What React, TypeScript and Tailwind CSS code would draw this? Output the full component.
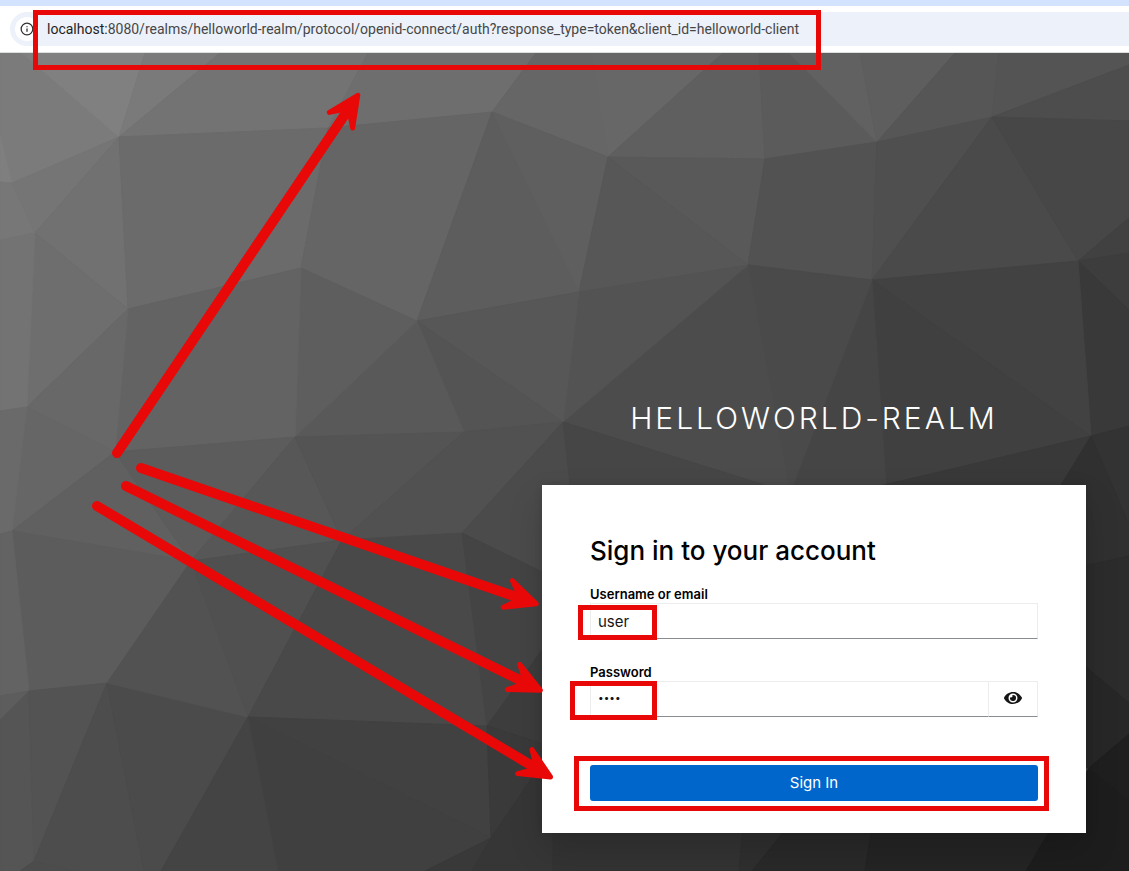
import React, { useState } from "react";
import { FaEye } from "react-icons/fa";
import { Info } from "lucide-react";

type Facet = [points: string, fill: string];

// Low-poly backdrop, drawn from the light top-left corner to the dark bottom-right one.
const FACETS: Facet[] = [
  ["0,53 22,53 119,137 12,183 0,135", "#7b7b7b"],
  ["22,53 145,53 119,137", "#808080"],
  ["145,53 220,53 119,137", "#7a7a7a"],
  ["220,53 368,53 328,128 119,137", "#737373"],
  ["368,53 536,53 492,112 328,128", "#6e6e6e"],
  ["536,53 591,53 608,157 492,112", "#666666"],
  ["591,53 723,53 608,157", "#676767"],
  ["723,53 759,53 765,159 608,157", "#5f5f5f"],
  ["759,53 789,53 877,142 765,159", "#5b5b5b"],
  ["789,53 860,53 877,142", "#616161"],
  ["860,53 955,53 877,142", "#5e5e5e"],
  ["955,53 999,53 992,117 877,142", "#565656"],
  ["999,53 1129,53 1129,65 992,117", "#545454"],
  ["992,117 1129,65 1129,121", "#4d4d4d"],
  ["0,135 12,183 0,182", "#7f7f7f"],
  ["0,182 12,183 35,233 0,240", "#777777"],
  ["12,183 119,137 35,233", "#757575"],
  ["119,137 128,309 35,233", "#717171"],
  ["35,233 128,309 27,407", "#6e6e6e"],
  ["35,233 27,407 0,411 0,240", "#737373"],
  ["119,137 328,128 301,268 128,309", "#6b6b6b"],
  ["328,128 492,112 417,321 301,268", "#656565"],
  ["492,112 579,292 417,321", "#5d5d5d"],
  ["492,112 608,157 579,292", "#5f5f5f"],
  ["608,157 765,159 748,265", "#595959"],
  ["608,157 748,265 579,292", "#575757"],
  ["765,159 877,142 872,280 748,265", "#525252"],
  ["877,142 992,117 872,280", "#4f4f4f"],
  ["992,117 1078,261 872,280", "#4a4a4a"],
  ["992,117 1129,121 1129,218 1078,261", "#474747"],
  ["1078,261 1129,218 1129,253", "#414141"],
  ["1078,261 1129,253 1129,310", "#3d3d3d"],
  ["1078,261 1129,310 1129,426 1091,436", "#393939"],
  ["872,280 1078,261 1091,436", "#424242"],
  ["872,280 1091,436 886,485", "#404040"],
  ["872,280 886,485 790,493", "#454545"],
  ["748,265 872,280 790,493", "#4a4a4a"],
  ["748,265 790,493 563,422", "#4c4c4c"],
  ["579,292 748,265 563,422", "#535353"],
  ["417,321 579,292 563,422", "#575757"],
  ["417,321 563,422 464,432", "#545454"],
  ["417,321 464,432 295,437", "#595959"],
  ["301,268 417,321 295,437", "#5e5e5e"],
  ["128,309 301,268 295,437 115,452", "#636363"],
  ["128,309 115,452 27,407", "#686868"],
  ["27,407 115,452 12,531", "#666666"],
  ["27,407 12,531 0,534 0,411", "#6a6a6a"],
  ["115,452 191,561 12,531", "#606060"],
  ["115,452 295,437 191,561", "#5c5c5c"],
  ["295,437 342,540 191,561", "#575757"],
  ["295,437 464,432 342,540", "#545454"],
  ["464,432 563,422 462,533 342,540", "#515151"],
  ["563,422 571,485 542,600 462,533", "#4b4b4b"],
  ["12,531 191,561 107,683 29,691", "#5c5c5c"],
  ["12,531 29,691 0,696 0,534", "#636363"],
  ["0,696 29,691 0,720", "#5d5d5d"],
  ["0,720 29,691 34,861 20,871 0,871", "#555555"],
  ["29,691 107,683 34,861", "#535353"],
  ["34,861 20,871 76,871", "#4c4c4c"],
  ["107,683 34,861 76,871 144,871", "#4d4d4d"],
  ["107,683 144,871 161,871 248,717", "#4b4b4b"],
  ["107,683 191,561 248,717", "#525252"],
  ["191,561 342,540 248,717", "#505050"],
  ["342,540 462,533 487,726 248,717", "#494949"],
  ["462,533 553,577 553,635 487,726", "#444444"],
  ["248,717 487,726 491,838", "#414141"],
  ["248,717 491,838 425,871 278,871", "#404040"],
  ["248,717 278,871 161,871", "#444444"],
  ["487,726 553,635 553,747", "#3d3d3d"],
  ["487,726 553,747 491,838", "#3a3a3a"],
  ["491,838 425,871 472,871", "#393939"],
  ["491,838 553,747 553,871 472,871", "#363636"],
  ["563,422 790,493 571,493", "#464646"],
  ["553,747 742,820 739,871 553,871", "#333333"],
  ["743,820 793,820 752,871 739,871", "#2f2f2f"],
  ["793,820 873,820 865,871 752,871", "#292929"],
  ["873,820 1056,820 1026,871 865,871", "#242424"],
  ["1056,820 1089,768 1129,800 1129,871 1026,871", "#1d1d1d"],
  ["1091,436 1061,485 1061,493 850,493", "#393939"],
  ["1091,436 1129,426 1129,525", "#333333"],
  ["1091,436 1129,525 1129,556 1080,567 1061,485", "#303030"],
  ["1080,567 1129,556 1129,703 1080,662", "#2c2c2c"],
  ["1080,662 1129,703 1129,734 1089,768 1080,768", "#272727"],
  ["1089,768 1129,734 1129,800", "#1f1f1f"],
];

type Point = { x: number; y: number };

const ARROWS: { from: Point; to: Point }[] = [
  { from: { x: 117, y: 453 }, to: { x: 360, y: 92 } },
  { from: { x: 141, y: 468 }, to: { x: 540, y: 605 } },
  { from: { x: 126, y: 486 }, to: { x: 544, y: 692 } },
  { from: { x: 97, y: 506 }, to: { x: 554, y: 779 } },
];

function Backdrop() {
  return (
    <svg
      aria-hidden="true"
      className="absolute inset-0 h-full w-full"
      viewBox="0 53 1129 818"
      preserveAspectRatio="xMidYMid slice"
    >
      {FACETS.map(([points, fill]) => (
        <polygon key={points} points={points} fill={fill} stroke={fill} strokeWidth="1" />
      ))}
    </svg>
  );
}

function Arrow({ from, to }: { from: Point; to: Point }) {
  const length = Math.hypot(to.x - from.x, to.y - from.y);
  const angle = (Math.atan2(to.y - from.y, to.x - from.x) * 180) / Math.PI;
  return (
    <g transform={`translate(${to.x} ${to.y}) rotate(${angle})`}>
      <line x1={-length} x2={-18} y1="0" y2="0" strokeWidth="10" strokeLinecap="round" />
      <polygon points="-4,0 -34,-14 -23,-3 -23,3 -34,14" strokeWidth="5" strokeLinejoin="round" />
    </g>
  );
}

function Highlight({ className }: { className: string }) {
  return (
    <span
      aria-hidden="true"
      className={`pointer-events-none absolute border-5 border-[#e90808] ${className}`}
    />
  );
}

function AddressBar() {
  return (
    <header className="relative z-10 border-b border-[#dcdfe0] bg-white">
      <div className="h-1.5 bg-[#d3e3fd]" />
      <div className="py-1.5 pl-2.5">
        <div className="flex h-[34px] items-center rounded-l-full bg-[#ecf1fa] pl-[5px]">
          <button
            type="button"
            aria-label="View site information"
            className="flex size-6 shrink-0 items-center justify-center rounded-full bg-white text-[#303030]"
          >
            <Info size={14} strokeWidth={2.2} />
          </button>
          <p className="relative ml-2 whitespace-nowrap font-['Roboto','Noto_Sans',sans-serif] text-sm leading-5 text-[#474747]">
            <span className="text-[#1f1f1f]">localhost:</span>
            8080/realms/helloworld-realm/protocol/openid-connect/auth?response_type=token&amp;client_id=helloworld-client
            <Highlight className="-top-[9px] -left-3.5 h-[60px] w-[788px]" />
          </p>
        </div>
      </div>
    </header>
  );
}

const fieldClass =
  "h-9 w-full min-w-0 border border-[#ededed] border-b-[#8a8d90] bg-white px-[7px] text-[#151515] outline-none";

const labelClass = "block text-[13px] leading-[18px] font-semibold text-black";

export default function App() {
  const [username, setUsername] = useState("user");
  const [password, setPassword] = useState("user");
  const [visible, setVisible] = useState(false);

  return (
    <div className="relative flex min-h-screen flex-col overflow-hidden bg-[#444444] font-['Inter','Liberation_Sans',sans-serif]">
      <AddressBar />
      <main className="relative flex grow flex-col items-end pr-[43px] pb-[38px]">
        <Backdrop />
        <div className="relative w-full max-w-[544px] pt-[345px]">
          <h1 className="mb-[47px] text-center text-[30px] leading-10 font-light tracking-[3px] text-white uppercase">
            helloworld-realm
          </h1>
          <section className="bg-white px-12 pt-12 pb-8 shadow-[0_16px_32px_rgba(3,3,3,0.16),0_0_8px_rgba(3,3,3,0.1)]">
            <h2 className="text-[26px] leading-9 font-medium text-black">Sign in to your account</h2>
            <form className="mt-4" onSubmit={(event) => event.preventDefault()}>
              <label htmlFor="username" className={labelClass}>
                Username or email
              </label>
              <div className="relative">
                <input
                  id="username"
                  type="text"
                  value={username}
                  onChange={(event) => setUsername(event.target.value)}
                  className={`${fieldClass} text-[15px]`}
                />
                <Highlight className="top-0.5 -left-3 h-[35px] w-[79px]" />
              </div>
              <label htmlFor="password" className={`${labelClass} mt-6`}>
                Password
              </label>
              <div className="relative flex">
                <input
                  id="password"
                  type={visible ? "text" : "password"}
                  value={password}
                  onChange={(event) => setPassword(event.target.value)}
                  className={`${fieldClass} border-r-0 pb-1 text-[10px]`}
                />
                <button
                  type="button"
                  aria-label="Show password"
                  onClick={() => setVisible(!visible)}
                  className="flex h-9 w-[50px] shrink-0 items-center justify-center border border-[#ededed] border-b-[#8a8d90] bg-white pb-0.5 text-[#151515]"
                >
                  <FaEye className="h-4 w-[18px]" />
                </button>
                <Highlight className="top-0 -left-5 h-[39px] w-[87px]" />
              </div>
              <div className="relative mt-12">
                <button
                  type="submit"
                  className="block h-9 w-full rounded-[3px] bg-[#0066cc] text-[15px] text-white"
                >
                  Sign In
                </button>
                <Highlight className="-top-[9px] -right-[11px] -bottom-2.5 -left-4" />
              </div>
            </form>
          </section>
        </div>
      </main>
      <svg
        aria-hidden="true"
        className="pointer-events-none absolute inset-0 z-20 h-full w-full fill-[#e90808] stroke-[#e90808]"
        viewBox="0 0 1129 871"
        preserveAspectRatio="xMaxYMin meet"
      >
        {ARROWS.map((arrow) => (
          <Arrow key={arrow.from.x} {...arrow} />
        ))}
      </svg>
    </div>
  );
}
